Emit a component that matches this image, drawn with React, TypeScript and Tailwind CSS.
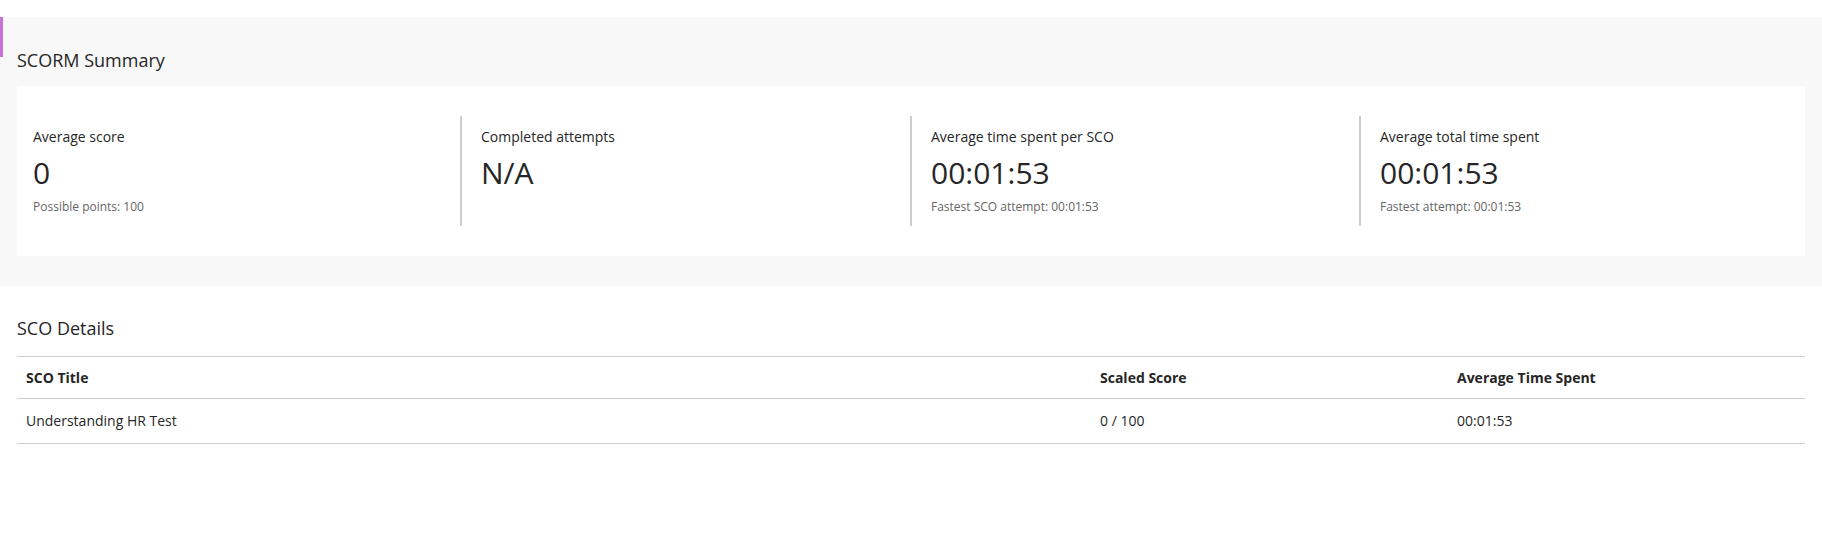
import React from 'react';

// Métricas do resumo
const STATS = [
  { label: 'Average score', value: '0', note: 'Possible points: 100' },
  { label: 'Completed attempts', value: 'N/A', note: '' },
  { label: 'Average time spent per SCO', value: '00:01:53', note: 'Fastest SCO attempt: 00:01:53' },
  { label: 'Average total time spent', value: '00:01:53', note: 'Fastest attempt: 00:01:53' },
];

const ROWS = [{ title: 'Understanding HR Test', score: '0 / 100', time: '00:01:53' }];

const App: React.FC = () => {
  return (
    <div className="min-h-screen bg-white pt-[17px] text-[#262626]" style={{ fontFamily: '"Open Sans", "Noto Sans", sans-serif' }}>
      {/* SCORM Summary */}
      <section className="relative bg-[#f8f8f8] px-[17px] pb-[30px] pt-[31px]">
        <span className="absolute left-0 top-0 h-[40px] w-[3px] bg-[#c86fd8]" />
        <h2 className="text-[18px] leading-6">SCORM Summary</h2>
        <div className="mt-[14px] grid grid-cols-[443px_450px_449px_1fr] bg-white py-[30px]">
          {STATS.map((s, i) => (
            <div
              key={s.label}
              className={`h-[110px] pt-[11px] ${i === 0 ? 'pl-[16px]' : 'border-l-2 border-[#cdcdcd] pl-[19px]'}`}
            >
              <p className="text-[14px] leading-5">{s.label}</p>
              <p className="mt-[8px] text-[30px] leading-[36px]">{s.value}</p>
              {s.note && <p className="mt-[8px] text-[12px] leading-4 text-[#666666]">{s.note}</p>}
            </div>
          ))}
        </div>
      </section>

      {/* SCO Details */}
      <section className="px-[17px] pt-[30px]">
        <h2 className="text-[18px] leading-6">SCO Details</h2>
        <div className="mt-[16px] border-t border-[#cdcdcd] text-[14px]">
          <div className="grid grid-cols-[1fr_357px_357px] border-b border-[#cdcdcd] pb-[10px] pt-[11px] font-bold leading-5">
            <div className="pl-[9px]">SCO Title</div>
            <div className="pl-[9px]">Scaled Score</div>
            <div className="pl-[9px]">Average Time Spent</div>
          </div>
          {ROWS.map((r) => (
            <div key={r.title} className="grid grid-cols-[1fr_357px_357px] border-b border-[#cdcdcd] py-[12px] leading-5">
              <div className="pl-[9px]">{r.title}</div>
              <div className="pl-[9px]">{r.score}</div>
              <div className="pl-[9px]">{r.time}</div>
            </div>
          ))}
        </div>
      </section>
    </div>
  );
};

export default App;
